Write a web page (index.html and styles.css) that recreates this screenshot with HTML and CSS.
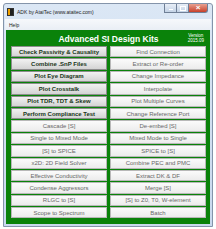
FILE: index.html
```html
<!DOCTYPE html>
<html>
<head>
<meta charset="utf-8">
<link rel="stylesheet" href="styles.css">
</head>
<body>
<div class="win">
  <div class="titlebar">
    <span class="appicon"></span>
    <span class="title">ADK by AtaiTec (www.ataitec.com)</span>
    <div class="ctrls">
      <span class="cbtn min"><i></i></span>
      <span class="cbtn max"><i></i></span>
      <span class="cbtn close">×</span>
    </div>
  </div>
  <div class="menubar"><span>Help</span></div>
  <div class="panel">
    <div class="header">
      <div class="heading">Advanced SI Design Kits</div>
      <div class="version">Version<br>2015.09</div>
    </div>
    <div class="grid">
      <div class="btn main">Check Passivity &amp; Causality</div>
      <div class="btn">Find Connection</div>
      <div class="btn main">Combine .SnP Files</div>
      <div class="btn">Extract or Re-order</div>
      <div class="btn main">Plot Eye Diagram</div>
      <div class="btn">Change Impedance</div>
      <div class="btn main">Plot Crosstalk</div>
      <div class="btn">Interpolate</div>
      <div class="btn main">Plot TDR, TDT &amp; Skew</div>
      <div class="btn">Plot Multiple Curves</div>
      <div class="btn main">Perform Compliance Test</div>
      <div class="btn">Change Reference Port</div>
      <div class="btn">Cascade [S]</div>
      <div class="btn">De-embed [S]</div>
      <div class="btn">Single to Mixed Mode</div>
      <div class="btn">Mixed Mode to Single</div>
      <div class="btn">[S] to SPICE</div>
      <div class="btn">SPICE to [S]</div>
      <div class="btn">x2D: 2D Field Solver</div>
      <div class="btn">Combine PEC and PMC</div>
      <div class="btn">Effective Conductivity</div>
      <div class="btn">Extract DK &amp; DF</div>
      <div class="btn">Condense Aggressors</div>
      <div class="btn">Merge [S]</div>
      <div class="btn">RLGC to [S]</div>
      <div class="btn">[S] to Z0, T0, W-element</div>
      <div class="btn">Scope to Spectrum</div>
      <div class="btn">Batch</div>
    </div>
  </div>
</div>
</body>
</html>
```
FILE: styles.css
```css
html, body {
  margin: 0;
  padding: 0;
  background: #ffffff;
}
body {
  font-family: "Liberation Sans", Arial, sans-serif;
}
.win {
  margin: 3px 0 0 3px;
  width: 210px;
  height: 224px;
  box-sizing: border-box;
  border: 1px solid #8494aa;
  border-radius: 3px 3px 0 0;
  background: linear-gradient(#dbe7f5, #c9d9ee);
  padding: 0 2px 2px 2px;
  display: flex;
  flex-direction: column;
}
.titlebar {
  height: 15px;
  display: flex;
  align-items: center;
  position: relative;
}
.appicon {
  width: 5px;
  height: 6px;
  margin-left: 1px;
  background: linear-gradient(90deg, #f0a000 40%, #202020 40%);
  border: 0.5px solid #333;
}
.title {
  font-size: 5px;
  color: #222;
  margin-left: 3px;
  white-space: nowrap;
}
.ctrls {
  position: absolute;
  right: 2px;
  top: 0;
  display: flex;
}
.cbtn {
  height: 9px;
  border: 1px solid #6f7f96;
  border-top: none;
  box-sizing: border-box;
  display: flex;
  align-items: center;
  justify-content: center;
}
.min, .max {
  width: 12px;
  background: linear-gradient(#e8eef7, #c4d3e6);
  border-right: none;
}
.min i {
  width: 4px;
  height: 1px;
  background: #fff;
  margin-top: 2px;
}
.max i {
  width: 4px;
  height: 3px;
  border: 1px solid #fff;
}
.close {
  width: 20px;
  background: linear-gradient(#e8a090, #c8402a);
  border-radius: 0 0 3px 0;
  color: #fff;
  font-size: 8px;
  line-height: 8px;
  font-weight: bold;
}
.menubar {
  height: 11px;
  background: linear-gradient(#f6f8fb, #e9eef5);
  font-size: 5px;
  display: flex;
  align-items: center;
  padding-left: 4px;
  color: #222;
  margin: 0 -1px;
}
.panel {
  flex: 1;
  background: #0a820a;
  padding: 0 4px 5px 5px;
  display: flex;
  flex-direction: column;
}
.header {
  height: 16px;
  position: relative;
  display: flex;
  align-items: center;
  justify-content: center;
}
.heading {
  color: #fff;
  font-weight: bold;
  font-size: 8.5px;
  margin-top: 1px;
}
.version {
  position: absolute;
  right: 2px;
  top: 3px;
  color: #fff;
  font-size: 4.5px;
  line-height: 5px;
  text-align: center;
}
.grid {
  display: grid;
  grid-template-columns: 1fr 1fr;
  grid-auto-rows: 11.4px;
  column-gap: 3px;
  row-gap: 1px;
}
.btn {
  background: linear-gradient(#fbfbfb, #ececec);
  border: 0.5px solid #b8b8b8;
  color: #686868;
  font-size: 6px;
  display: flex;
  align-items: center;
  justify-content: center;
  white-space: nowrap;
}
.btn.main {
  background: linear-gradient(#f2f2f2, #d4d4d4);
  border-color: #8d8d8d;
  color: #1a361a;
  font-weight: bold;
}
```
